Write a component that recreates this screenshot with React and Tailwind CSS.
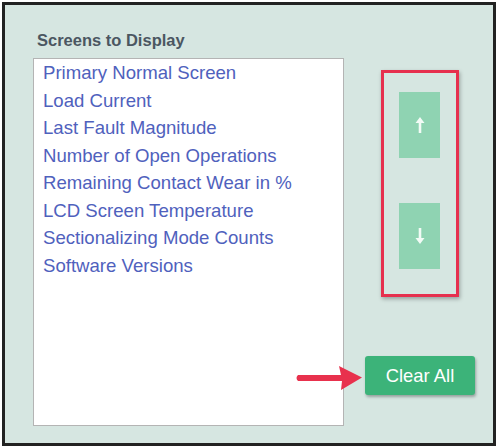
const items = [
  "Primary Normal Screen",
  "Load Current",
  "Last Fault Magnitude",
  "Number of Open Operations",
  "Remaining Contact Wear in %",
  "LCD Screen Temperature",
  "Sectionalizing Mode Counts",
  "Software Versions",
];

function ArrowIcon({ down }) {
  return (
    <svg width="10" height="18" viewBox="0 0 10 18" className={down ? "rotate-180" : ""}>
      <path d="M5 1 L9.5 7 H6.3 V17 H3.7 V7 H0.5 Z" fill="#f2fbf6" />
    </svg>
  );
}

export default function App() {
  return (
    <div className="bg-white p-[2px] w-[497px] h-[448px] font-['Liberation_Sans',Arial,sans-serif]">
      <div className="w-[494px] h-[444px] border-[3px] border-[#222] bg-[#d6e6e1] pl-[28px] pt-[26px]">
        <h2 className="text-[16.5px] leading-[18px] font-bold text-[#4b5661] pl-[4px]">
          Screens to Display
        </h2>
        <div className="flex mt-[9px]">
          <ul className="w-[311px] h-[368px] bg-white border border-[#b4b4b4] pl-[9px]">
            {items.map((t) => (
              <li key={t} className="text-[18.6px] leading-[27.5px] text-[#4f61bd]">
                {t}
              </li>
            ))}
          </ul>
          <div className="ml-[21px] flex flex-col">
            <div className="ml-[16px] mt-[12px] w-[78px] h-[227px] border-[3px] border-[#e6304e] shadow-[1px_2px_4px_rgba(0,0,0,0.3)] pl-[15px] pt-[19px] flex flex-col">
              <button className="w-[41px] h-[66px] bg-[#8fd3b2] flex items-center justify-center">
                <ArrowIcon />
              </button>
              <button className="mt-[45px] w-[41px] h-[66px] bg-[#8fd3b2] flex items-center justify-center">
                <ArrowIcon down />
              </button>
            </div>
            <div className="relative mt-[59px]">
              <button className="w-[110px] h-[39px] rounded-[3px] bg-[#3cb379] text-white text-[18.4px] shadow-[1px_2px_3px_rgba(0,0,0,0.3)]">
                Clear All
              </button>
              <svg
                className="absolute left-[-70px] top-[9px]"
                width="68"
                height="26"
                viewBox="0 0 68 26"
              >
                <path
                  d="M3 10 H46 L44 1 L67 12.5 L46 25 L47 16 H3 Q0 13 3 10 Z"
                  fill="#e8314d"
                />
              </svg>
            </div>
          </div>
        </div>
      </div>
    </div>
  );
}
